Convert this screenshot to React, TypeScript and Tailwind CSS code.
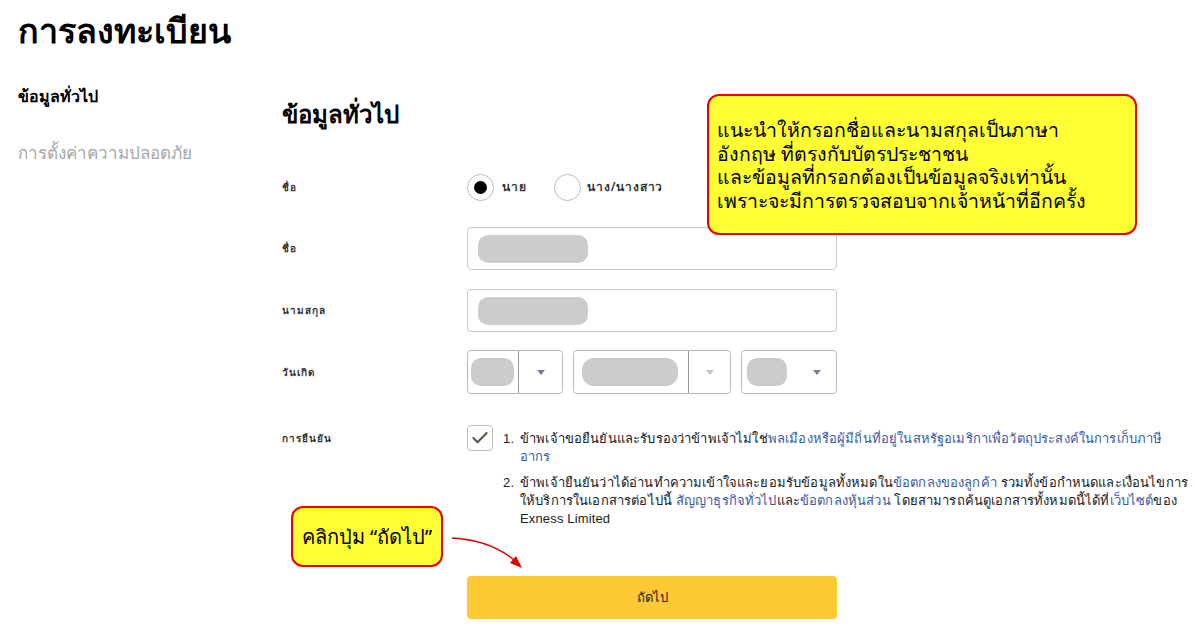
import { Check } from "lucide-react"

const font = { fontFamily: '"Noto Sans", "DejaVu Sans", sans-serif' }
const listFont = { fontFamily: '"Liberation Sans", "Noto Sans", sans-serif' }

function Pill({ w }: { w: string }) {
  return <div className={`h-[28px] ${w} rounded-[10px] bg-[#cccccc]`} />
}

function Arrow({ light }: { light?: boolean }) {
  return (
    <span
      className={`inline-block w-0 h-0 border-x-[4px] border-x-transparent border-t-[5px] ${
        light ? "border-t-[#c4c4c4]" : "border-t-[#7c7c98]"
      }`}
    />
  )
}

function Label({ children }: { children: React.ReactNode }) {
  return <div className="w-[185px] shrink-0 text-[10px] tracking-[1px] font-semibold text-[#333]">{children}</div>
}

export default function App() {
  return (
    <div className="relative w-[1200px] h-[631px] bg-white overflow-hidden text-black" style={font}>
      <h1 className="pl-[18px] pt-[8px] text-[34px] leading-[44px] font-bold">การลงทะเบียน</h1>

      <div className="flex">
        {/* sidebar */}
        <div className="w-[282px] shrink-0 pl-[18px] pt-[32px]">
          <p className="text-[16px] leading-[24px] font-semibold">ข้อมูลทั่วไป</p>
          <p className="mt-[33px] text-[17px] leading-[24px] text-[#a6a6a6]">การตั้งค่าความปลอดภัย</p>
        </div>

        {/* main form */}
        <div className="flex-1 pt-[46px]">
          <h2 className="text-[24px] leading-[32px] font-bold">ข้อมูลทั่วไป</h2>

          <div className="mt-[43px] flex items-center h-[28px]">
            <Label>ชื่อ</Label>
            <label className="flex items-center gap-[8px]">
              <span className="w-[27px] h-[27px] rounded-full border border-[#bbb] flex items-center justify-center">
                <span className="w-[13px] h-[13px] rounded-full bg-black" />
              </span>
              <span className="text-[12px] tracking-[0.8px] font-semibold text-[#333]">นาย</span>
            </label>
            <label className="ml-[28px] flex items-center gap-[6px]">
              <span className="w-[27px] h-[27px] rounded-full border border-[#bbb]" />
              <span className="text-[12px] tracking-[0.8px] font-semibold text-[#333]">นาง/นางสาว</span>
            </label>
          </div>

          <div className="mt-[26px] flex items-center">
            <Label>ชื่อ</Label>
            <div className="w-[370px] h-[43px] rounded-[4px] border border-[#c8c8c8] flex items-center px-[10px]">
              <Pill w="w-[110px]" />
            </div>
          </div>

          <div className="mt-[19px] flex items-center">
            <Label>นามสกุล</Label>
            <div className="w-[370px] h-[43px] rounded-[4px] border border-[#c8c8c8] flex items-center px-[10px]">
              <Pill w="w-[110px]" />
            </div>
          </div>

          <div className="mt-[18px] flex items-center">
            <Label>วันเกิด</Label>
            <div className="w-[370px] h-[44px] flex gap-[10px]">
              <div className="w-[96px] rounded-[4px] border border-[#b8b8b8] flex items-center">
                <div className="w-[50px] pl-[3px]">
                  <div className="h-[28px] w-[43px] rounded-[10px] bg-[#cccccc]" />
                </div>
                <div className="self-stretch border-l border-[#999]" />
                <div className="flex-1 flex justify-center"><Arrow /></div>
              </div>
              <div className="w-[158px] rounded-[4px] border border-[#b8b8b8] flex items-center">
                <div className="w-[114px] pl-[8px]">
                  <div className="h-[28px] w-[96px] rounded-[12px] bg-[#cccccc]" />
                </div>
                <div className="self-stretch border-l border-[#999]" />
                <div className="flex-1 flex justify-center"><Arrow light /></div>
              </div>
              <div className="w-[96px] rounded-[4px] border border-[#b8b8b8] flex items-center">
                <div className="pl-[5px]">
                  <div className="h-[28px] w-[40px] rounded-[10px] bg-[#cccccc]" />
                </div>
                <div className="flex-1 flex justify-end pr-[15px]"><Arrow /></div>
              </div>
            </div>
          </div>

          <div className="mt-[31px] flex items-start">
            <div className="w-[185px] shrink-0 pt-[6px] text-[10px] tracking-[1px] font-semibold text-[#333]">การยืนยัน</div>
            <div className="w-[26px] h-[26px] shrink-0 rounded-[4px] border border-[#bbb] flex items-center justify-center">
              <Check className="w-[20px] h-[20px] text-[#555a48]" strokeWidth={2.5} />
            </div>
            <ol
              className="ml-[10px] w-[690px] text-[13px] leading-[18px] tracking-[0.15px] text-[#222] pt-[5px] whitespace-nowrap"
              style={listFont}
            >
              <li className="flex">
                <span className="w-[17px] shrink-0">1.</span>
                <span>
                  ข้าพเจ้าขอยืนยันและรับรองว่าข้าพเจ้าไม่ใช่
                  <span className="text-[#3d5aa0]">พลเมืองหรือผู้มีถิ่นที่อยู่ในสหรัฐอเมริกาเพื่อวัตถุประสงค์ในการเก็บภาษี</span>
                  <br />
                  <span className="text-[#3d5aa0]">อากร</span>
                </span>
              </li>
              <li className="flex mt-[8px]">
                <span className="w-[17px] shrink-0">2.</span>
                <span>
                  ข้าพเจ้ายืนยันว่าได้อ่านทำความเข้าใจและยอมรับข้อมูลทั้งหมดใน
                  <span className="text-[#3d5aa0]">ข้อตกลงของลูกค้า</span> รวมทั้งข้อกำหนดและเงื่อนไขการ
                  <br />
                  ให้บริการในเอกสารต่อไปนี้ <span className="text-[#3d5aa0]">สัญญาธุรกิจทั่วไป</span>และ
                  <span className="text-[#3d5aa0]">ข้อตกลงหุ้นส่วน</span> โดยสามารถค้นดูเอกสารทั้งหมดนี้ได้ที่
                  <span className="text-[#3d5aa0]">เว็บไซต์</span>ของ
                  <br />
                  Exness Limited
                </span>
              </li>
            </ol>
          </div>

          <div className="mt-[48px] flex">
            <div className="w-[185px] shrink-0" />
            <button className="w-[370px] h-[43px] rounded-[4px] bg-[#fdca35] text-[13px] text-[#222]">ถัดไป</button>
          </div>
        </div>
      </div>

      {/* callout: top right */}
      <div className="absolute left-[707px] top-[94px] w-[430px] h-[141px] rounded-[12px] border-2 border-[#ee0000] bg-[#ffff33] px-[8px] pt-[22px] text-[19.5px] leading-[23.5px]">
        แนะนำให้กรอกชื่อและนามสกุลเป็นภาษา
        <br />
        อังกฤษ ที่ตรงกับบัตรประชาชน
        <br />
        และข้อมูลที่กรอกต้องเป็นข้อมูลจริงเท่านั้น
        <br />
        เพราะจะมีการตรวจสอบจากเจ้าหน้าที่อีกครั้ง
      </div>

      {/* callout: bottom left */}
      <div className="absolute left-[291px] top-[506px] w-[152px] h-[61px] rounded-[12px] border-2 border-[#ee0000] bg-[#ffff33] flex items-center justify-center text-[20px]">
        คลิกปุ่ม “ถัดไป”
      </div>
      <svg className="absolute left-[440px] top-[530px]" width="90" height="45" viewBox="0 0 90 45">
        <path d="M12 8 Q50 10 74 30" fill="none" stroke="#e00000" strokeWidth="1.5" />
        <path d="M82 38 L70 33 L76 26 Z" fill="#e00000" />
      </svg>
    </div>
  )
}
